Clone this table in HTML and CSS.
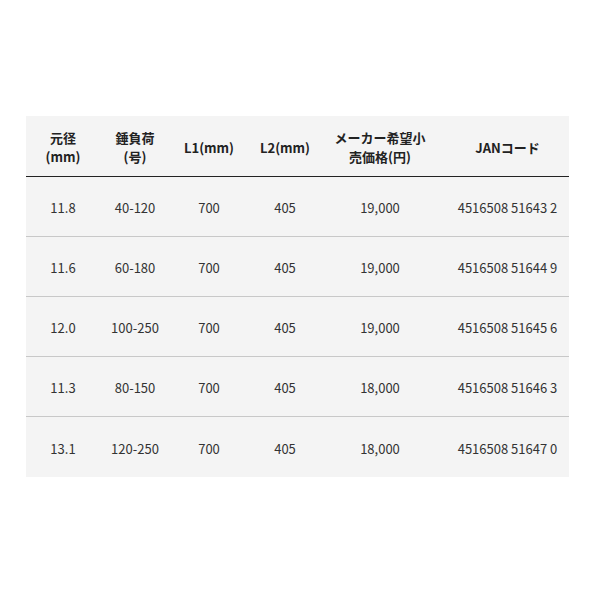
FILE: index.html
```html
<!DOCTYPE html>
<html lang="ja">
<head>
<meta charset="utf-8">
<link rel="stylesheet" href="styles.css">
</head>
<body>
<div class="page">
<table class="spec">
<colgroup>
<col class="c1"><col class="c2"><col class="c3"><col class="c4"><col class="c5"><col class="c6">
</colgroup>
<thead>
<tr>
<th>元径<br>(mm)</th>
<th>錘負荷<br>(号)</th>
<th>L1(mm)</th>
<th>L2(mm)</th>
<th>メーカー希望小<br>売価格(円)</th>
<th class="jan">JANコード</th>
</tr>
</thead>
<tbody>
<tr><td>11.8</td><td>40-120</td><td>700</td><td>405</td><td>19,000</td><td class="jan">4516508 51643 2</td></tr>
<tr><td>11.6</td><td>60-180</td><td>700</td><td>405</td><td>19,000</td><td class="jan">4516508 51644 9</td></tr>
<tr><td>12.0</td><td>100-250</td><td>700</td><td>405</td><td>19,000</td><td class="jan">4516508 51645 6</td></tr>
<tr><td>11.3</td><td>80-150</td><td>700</td><td>405</td><td>18,000</td><td class="jan">4516508 51646 3</td></tr>
<tr><td>13.1</td><td>120-250</td><td>700</td><td>405</td><td>18,000</td><td class="jan">4516508 51647 0</td></tr>
</tbody>
</table>
</div>
</body>
</html>
```
FILE: styles.css
```css
html, body {
  margin: 0;
  padding: 0;
  background: #ffffff;
}
.page {
  padding: 116px 0 0 26px;
}
.spec {
  width: 543px;
  border-collapse: separate;
  border-spacing: 0;
  table-layout: fixed;
  background: #f4f4f4;
  font-family: "Noto Sans CJK JP", "Noto Sans", sans-serif;
  font-size: 13px;
  line-height: 19px;
  color: #333333;
}
.c1 { width: 74px; }
.c2 { width: 70px; }
.c3 { width: 78px; }
.c4 { width: 74px; }
.c5 { width: 116px; }
.c6 { width: 131px; }
.spec th,
.spec td {
  box-sizing: border-box;
  height: 60px;
  padding: 2px 4px 0;
  text-align: center;
  vertical-align: middle;
}
.spec th {
  height: 61px;
  font-weight: bold;
  color: #222222;
  border-bottom: 1px solid #222222;
}
.spec td {
  border-bottom: 1px solid #c8c8c8;
}
.spec .jan {
  padding: 2px 0 0 8px;
}
.spec tbody tr:last-child td {
  border-bottom: none;
}
```
